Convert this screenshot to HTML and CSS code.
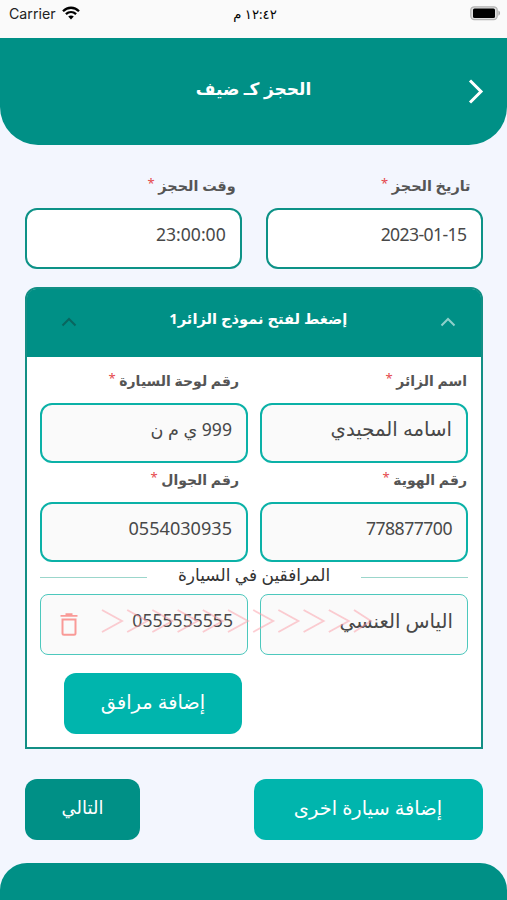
FILE: index.html
```
<!DOCTYPE html>
<html lang="ar" dir="rtl">
<head>
    <meta charset="UTF-8">
    <meta name="viewport" content="width=device-width, initial-scale=1.0">
    <title>الحجز كـ ضيف</title>
    <link rel="stylesheet" href="styles.css">
</head>
<body>
    <div class="status-bar" dir="ltr">
        <div class="carrier">
            <span>Carrier</span>
            <svg width="18" height="14" viewBox="0 0 18 14" fill="none" stroke="#000" stroke-width="2.3">
                <path d="M1 5.2C5.6 .6 12.4 .6 17 5.2"/>
                <path d="M3.9 8.2c3-2.8 7.2-2.8 10.2 0"/>
                <path d="M6.2 10.5c1.6-1.5 4-1.5 5.6 0L9 13.4z" fill="#000" stroke="none"/>
            </svg>
        </div>
        <span class="time" dir="rtl">١٢:٤٢ م</span>
        <svg class="battery" width="31" height="15" viewBox="0 0 31 15">
            <rect x=".8" y=".8" width="26.4" height="12.8" rx="3.5" fill="#e0e0e0" stroke="#b4b4b4" stroke-width="1.3"/>
            <rect x="3" y="2.6" width="22" height="9.4" rx="1.5" fill="#000"/>
            <path d="M28.4 4.6c2.2 1 2.2 4.2 0 5.2z" fill="#aaa"/>
        </svg>
    </div>

    <header class="header">
        <svg class="back" width="16" height="25" viewBox="0 0 16 25" fill="none" stroke="#fff" stroke-width="3">
            <path d="M2 1.5l11 11-11 11"/>
        </svg>
        <h1>الحجز كـ ضيف</h1>
    </header>

    <main>
        <div class="booking">
            <div class="field">
                <label>تاريخ الحجز <b>*</b></label>
                <div class="input date">2023-01-15</div>
            </div>
            <div class="field">
                <label>وقت الحجز <b>*</b></label>
                <div class="input">23:00:00</div>
            </div>
        </div>

        <section class="panel">
            <div class="panel-head">
                <svg width="16" height="10" viewBox="0 0 16 10" fill="none" stroke="#8fd0cb" stroke-width="2"><path d="M1.5 8.5L8 2l6.5 6.5"/></svg>
                <h2>إضغط لفتح نموذج الزائر1</h2>
                <svg width="16" height="10" viewBox="0 0 16 10" fill="none" stroke="#09665f" stroke-width="2"><path d="M1.5 8.5L8 2l6.5 6.5"/></svg>
            </div>
            <div class="panel-body">
                <div class="visitor">
                    <div class="field">
                        <label>اسم الزائر <b>*</b></label>
                        <div class="input name">اسامه المجيدي</div>
                    </div>
                    <div class="field">
                        <label>رقم لوحة السيارة <b>*</b></label>
                        <div class="input">999 ي م ن</div>
                    </div>
                    <div class="field">
                        <label>رقم الهوية <b>*</b></label>
                        <div class="input id-number">778877700</div>
                    </div>
                    <div class="field">
                        <label>رقم الجوال <b>*</b></label>
                        <div class="input phone">0554030935</div>
                    </div>
                </div>

                <div class="divider"><span>المرافقين في السيارة</span></div>

                <div class="companion">
                    <div class="input name">الياس العنسي</div>
                    <div class="input">0555555555</div>
                    <svg class="arrows" width="272" height="26" viewBox="0 0 272 26" fill="none" stroke="#fb9ba5" stroke-opacity=".5" stroke-width="1.8">
                        <path d="M1 2l20 11L1 24M26.2 2l20 11-20 11M51.4 2l20 11-20 11M76.6 2l20 11-20 11M101.8 2l20 11-20 11M127 2l20 11-20 11M152.2 2l20 11-20 11M177.4 2l20 11-20 11M202.6 2l20 11-20 11M227.8 2l20 11-20 11M253 2l17 11-17 11"/>
                    </svg>
                    <svg class="trash" width="18" height="23" viewBox="0 0 18 23" fill="none" stroke="#f99a97" stroke-width="2">
                        <path d="M.5 2.8h17M5.5 1.2h7" stroke-width="1.8"/>
                        <path d="M2.5 6.5h13v13.8q0 1.5-1.5 1.5H4q-1.5 0-1.5-1.5z"/>
                    </svg>
                </div>

                <button class="btn add-companion">إضافة مرافق</button>
            </div>
        </section>

        <div class="actions">
            <button class="btn add-car">إضافة سيارة اخرى</button>
            <button class="btn next">التالي</button>
        </div>
    </main>

    <footer class="footer"></footer>
</body>
</html>
```
FILE: styles.css
```
* {
    box-sizing: border-box;
}
body {
    margin: 0;
    height: 900px;
    overflow: hidden;
    display: flex;
    flex-direction: column;
    background-color: #f3f6fe;
    color: #484848;
    font-family: "Noto Sans", "DejaVu Sans", sans-serif;
}
svg {
    display: block;
    flex: none;
}
.status-bar {
    height: 38px;
    flex: none;
    display: grid;
    grid-template-columns: 1fr auto 1fr;
    padding: 6px 6px 0 9px;
    background-color: #fafafa;
    color: #222;
    line-height: 16px;
}
.carrier {
    display: flex;
    gap: 6px;
    font-family: Inter, sans-serif;
    font-size: 14.2px;
}
.time {
    font-size: 13.2px;
    color: #000;
}
.battery {
    justify-self: end;
}
.header {
    height: 107px;
    flex: none;
    position: relative;
    background-color: #009086;
    border-radius: 0 0 38px 38px;
    color: #fff;
    text-align: center;
}
.header h1 {
    margin: 0;
    padding-top: 38px;
    font-size: 17px;
    line-height: 26px;
}
.back {
    position: absolute;
    right: 23px;
    top: 41px;
}
main {
    flex: none;
    padding: 20px 24.5px 0 25px;
}
.booking, .visitor {
    display: grid;
    grid-template-columns: 1fr 1fr;
}
.booking {
    column-gap: 24px;
}
.field label {
    display: block;
    height: 39px;
    padding: 0 1px;
    font-size: 14px;
    font-weight: bold;
    line-height: 34px;
    white-space: nowrap;
    color: #555;
}
.visitor .field:nth-child(even) label {
    padding-right: 9px;
}
.booking label {
    height: 43px;
    padding: 0 12px;
    font-size: 14.4px;
    line-height: 41px;
}
.booking .field + .field label {
    padding-right: 6px;
}
.field b {
    position: relative;
    top: -3px;
    font-weight: normal;
    font-size: 13px;
    color: #e5484d;
}
.input {
    height: 60px;
    border: 2px solid #0bb1a7;
    border-radius: 12px;
    background-color: #fafafa;
    padding: 0 14px;
    font-size: 17.6px;
    line-height: 49px;
    white-space: nowrap;
}
.input.name {
    font-size: 19.7px;
    line-height: 47px;
}
.input.date {
    letter-spacing: -0.6px;
}
.input.id-number {
    letter-spacing: -0.5px;
}
.input.phone {
    font-size: 18.1px;
}
.booking .input {
    height: 61px;
    border-color: #0d9287;
    background-color: #fff;
}
.panel {
    height: 462px;
    margin-top: 18px;
    border: 2.5px solid #128f85;
    border-radius: 12px 12px 0 0;
    background-color: #fff;
}
.panel-head {
    height: 68px;
    display: flex;
    justify-content: space-between;
    align-items: center;
    padding: 0 25px 2px 34px;
    background-color: #009086;
    border-radius: 9px 9px 0 0;
    color: #fff;
}
.panel-head h2 {
    margin: 0 0 8px;
    font-size: 14.7px;
}
.panel-body {
    padding: 7px 12.5px 0 13px;
}
.visitor {
    column-gap: 12px;
}
.divider {
    height: 30px;
    display: flex;
    justify-content: space-between;
    font-size: 17px;
    line-height: 25px;
    color: #333;
}
.divider::before, .divider::after {
    content: "";
    width: 107px;
    height: 1px;
    margin-top: 15px;
    background-color: #9bd6cb;
}
.companion {
    position: relative;
    display: grid;
    grid-template-columns: 1fr 1fr;
    column-gap: 12px;
    margin-top: 2px;
}
.companion .input {
    height: 61px;
    border: 1.5px solid #4dc8bd;
    border-radius: 8px;
    line-height: 51px;
}
.arrows {
    position: absolute;
    left: 61px;
    top: 14px;
}
.trash {
    position: absolute;
    left: 20px;
    top: 19px;
}
.btn {
    height: 61px;
    border: 0;
    border-radius: 12px;
    background-color: #00b5ad;
    color: #fff;
    padding: 0 0 5px;
    font-family: inherit;
    font-size: 19.4px;
}
.add-companion {
    display: block;
    width: 178px;
    margin: 18px auto 0 24px;
}
.actions {
    display: flex;
    justify-content: space-between;
    margin-top: 30px;
}
.add-car {
    width: 229px;
}
.next {
    width: 115px;
    background-color: #009086;
    font-size: 18px;
}
.footer {
    height: 37px;
    flex: none;
    margin-top: 23px;
    background-color: #009086;
    border-radius: 27px 27px 0 0;
}
```
